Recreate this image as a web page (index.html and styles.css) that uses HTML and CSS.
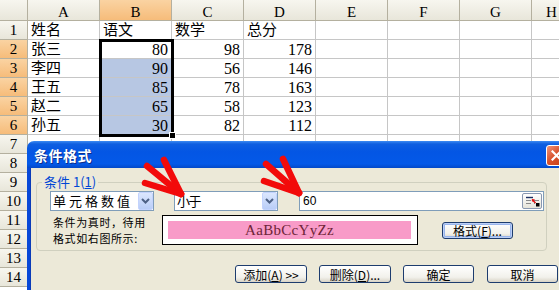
FILE: index.html
```html
<!DOCTYPE html>
<html lang="zh-CN">
<head>
<meta charset="utf-8">
<title>条件格式</title>
<link rel="stylesheet" href="styles.css">
</head>
<body>
<div class="sheet">
  <div class="grid">
    <div class="hd corner"></div>
    <div class="hd ch">A</div><div class="hd ch on">B</div><div class="hd ch">C</div><div class="hd ch">D</div><div class="hd ch">E</div><div class="hd ch">F</div><div class="hd ch">G</div><div class="hd ch">H</div>

    <div class="hd rh">1</div><div class="c">姓名</div><div class="c">语文</div><div class="c">数学</div><div class="c">总分</div><div class="c"></div><div class="c"></div><div class="c"></div><div class="c"></div>
    <div class="hd rh on">2</div><div class="c">张三</div><div class="c n">80</div><div class="c n">98</div><div class="c n">178</div><div class="c"></div><div class="c"></div><div class="c"></div><div class="c"></div>
    <div class="hd rh on">3</div><div class="c">李四</div><div class="c n s">90</div><div class="c n">56</div><div class="c n">146</div><div class="c"></div><div class="c"></div><div class="c"></div><div class="c"></div>
    <div class="hd rh on">4</div><div class="c">王五</div><div class="c n s">85</div><div class="c n">78</div><div class="c n">163</div><div class="c"></div><div class="c"></div><div class="c"></div><div class="c"></div>
    <div class="hd rh on">5</div><div class="c">赵二</div><div class="c n s">65</div><div class="c n">58</div><div class="c n">123</div><div class="c"></div><div class="c"></div><div class="c"></div><div class="c"></div>
    <div class="hd rh on">6</div><div class="c">孙五</div><div class="c n s">30</div><div class="c n">82</div><div class="c n">112</div><div class="c"></div><div class="c"></div><div class="c"></div><div class="c"></div>
    <div class="hd rh">7</div><div class="c"></div><div class="c"></div><div class="c"></div><div class="c"></div><div class="c"></div><div class="c"></div><div class="c"></div><div class="c"></div>
    <div class="hd rh">8</div><div class="c"></div><div class="c"></div><div class="c"></div><div class="c"></div><div class="c"></div><div class="c"></div><div class="c"></div><div class="c"></div>
    <div class="hd rh">9</div><div class="c"></div><div class="c"></div><div class="c"></div><div class="c"></div><div class="c"></div><div class="c"></div><div class="c"></div><div class="c"></div>
    <div class="hd rh">10</div><div class="c"></div><div class="c"></div><div class="c"></div><div class="c"></div><div class="c"></div><div class="c"></div><div class="c"></div><div class="c"></div>
    <div class="hd rh">11</div><div class="c"></div><div class="c"></div><div class="c"></div><div class="c"></div><div class="c"></div><div class="c"></div><div class="c"></div><div class="c"></div>
    <div class="hd rh">12</div><div class="c"></div><div class="c"></div><div class="c"></div><div class="c"></div><div class="c"></div><div class="c"></div><div class="c"></div><div class="c"></div>
    <div class="hd rh">13</div><div class="c"></div><div class="c"></div><div class="c"></div><div class="c"></div><div class="c"></div><div class="c"></div><div class="c"></div><div class="c"></div>
    <div class="hd rh">14</div><div class="c"></div><div class="c"></div><div class="c"></div><div class="c"></div><div class="c"></div><div class="c"></div><div class="c"></div><div class="c"></div>
  </div>
  <div class="selection"><span class="handle"></span></div>
</div>

<div class="dialog">
  <div class="titlebar">
    <span class="title">条件格式</span>
    <span class="close"><svg width="11" height="11" viewBox="0 0 11 11"><path d="M1.5 1.5 L9.5 9.5 M9.5 1.5 L1.5 9.5" stroke="#fff" stroke-width="2.2" stroke-linecap="square"/></svg></span>
  </div>
  <div class="dbody">
    <fieldset class="group">
      <legend>条件 1(<u>1</u>)</legend>
      <div class="row1">
        <div class="combo c1"><span class="val">单元格数值</span><span class="drop"><svg width="9" height="6" viewBox="0 0 9 6"><path d="M1 1 L4.5 4.5 L8 1" fill="none" stroke="#4D6185" stroke-width="2"/></svg></span></div>
        <div class="combo c2"><span class="val">小于</span><span class="drop"><svg width="9" height="6" viewBox="0 0 9 6"><path d="M1 1 L4.5 4.5 L8 1" fill="none" stroke="#4D6185" stroke-width="2"/></svg></span></div>
        <div class="field"><span class="val">60</span><span class="collapse"><svg width="15" height="11" viewBox="0 0 15 11"><path d="M1 1.5 H8" stroke="#1C2F63" stroke-width="1.4"/><path d="M1 4.5 H6 M1 7.5 H6 M9 4.5 H14 M9 7.5 H10" stroke="#8A8A8A" stroke-width="1"/><path d="M7 3.5 L10.5 7" stroke="#E01010" stroke-width="1.6"/><path d="M7 3 L10 3.6 L7.6 6 Z" fill="#E01010"/><rect x="11" y="7" width="3.5" height="3.5" fill="#000"/></svg></span></div>
      </div>
      <div class="row2">
        <div class="hint"><div class="hl">条件为真时，待用</div><div class="hl">格式如右图所示:</div></div>
        <div class="preview"><div class="sample">AaBbCcYyZz</div></div>
        <button class="btn fmt">格式(<u>F</u>)...</button>
      </div>
    </fieldset>
    <div class="actions">
      <button class="btn">添加(<u>A</u>) &gt;&gt;</button>
      <button class="btn">删除(<u>D</u>)...</button>
      <button class="btn">确定</button>
      <button class="btn">取消</button>
    </div>
  </div>
</div>

<svg class="arrows" width="559" height="290" viewBox="0 0 559 290">
  <g fill="none" stroke="#F20A0A" stroke-width="6.5" stroke-linecap="round" stroke-linejoin="round">
    <path d="M145 183 L181 194"/>
    <path d="M147 166 L181 194"/>
    <path d="M164 160 L181 194"/>
    <path d="M264 181 L299 193"/>
    <path d="M266 164 L299 193"/>
    <path d="M283 159 L299 193"/>
  </g>
</svg>
</body>
</html>
```

FILE: styles.css
```css
html, body {
  margin: 0;
  padding: 0;
}
body {
  width: 559px;
  height: 290px;
  overflow: hidden;
  position: relative;
  background: #fff;
  font-family: "Liberation Serif", "Noto Sans CJK SC", serif;
  color: #000;
}

/* spreadsheet */
.sheet {
  position: relative;
}
.grid {
  display: grid;
  grid-template-columns: 28px repeat(7, 72px) 40px;
  grid-template-rows: 21px;
  grid-auto-rows: 19px;
}
.grid > div {
  box-sizing: border-box;
  border-right: 1px solid #C6C6C6;
  border-bottom: 1px solid #C6C6C6;
  white-space: nowrap;
  overflow: hidden;
}
.hd {
  background: linear-gradient(#F7F6EF, #E8E6DA);
  border-color: #B4B09F !important;
  text-align: center;
  font-family: "Liberation Serif", serif;
  font-size: 15px;
  line-height: 20px;
}
.ch {
  padding-top: 2px;
}
.hd.on {
  background: linear-gradient(#FAD3A2, #F6BC7A);
}
.rh {
  line-height: 19px;
}
.c {
  font-family: "Liberation Serif", "Noto Sans CJK SC", serif;
  font-size: 15px;
  line-height: 19px;
  padding-left: 3px;
}
.c.n {
  text-align: right;
  padding-right: 3px;
  font-size: 16px;
}
.c.s {
  background: #B7C7E3;
}
.selection {
  position: absolute;
  left: 99px;
  top: 39px;
  width: 75px;
  height: 98px;
  box-sizing: border-box;
  border: 3px solid #000;
}
.handle {
  position: absolute;
  right: -5px;
  bottom: -5px;
  width: 5px;
  height: 5px;
  background: #000;
  border: 1px solid #fff;
}

/* dialog */
.dialog {
  position: absolute;
  left: 27px;
  top: 141px;
  width: 545px;
  height: 160px;
  display: flex;
  flex-direction: column;
  font-family: "Noto Sans CJK SC", "Liberation Sans", sans-serif;
}
.titlebar {
  height: 27px;
  flex: none;
  display: flex;
  align-items: center;
  justify-content: space-between;
  padding: 0 5px 0 7px;
  border-radius: 7px 7px 0 0;
  background: linear-gradient(#3D8BF2 0, #0F5FE0 3px, #0456E4 40%, #0459E8 85%, #0349C8 100%);
}
.title {
  color: #fff;
  font-weight: bold;
  font-size: 14px;
  letter-spacing: 0.5px;
  text-shadow: 1px 1px 0 #0A2E8C;
}
.close {
  width: 19px;
  height: 19px;
  border: 1px solid #fff;
  border-radius: 3px;
  background: linear-gradient(135deg, #F0957A, #D8532E 45%, #C23A12);
  display: flex;
  align-items: center;
  justify-content: center;
  margin-top: 1px;
}
.dbody {
  flex: 1;
  background: #ECE9D8;
  border-left: 3px solid #0848D8;
  box-shadow: inset 1px 0 0 #0A3BB8;
}
.group {
  margin: 6px 0 0 6px;
  width: 511px;
  box-sizing: border-box;
  border: 1px solid #D0D0BF;
  border-radius: 4px;
  padding: 1px 0 5px 13px;
}
.group legend {
  color: #0046D5;
  font-size: 13px;
  line-height: 16px;
  padding: 0 2px;
  margin-left: -8px;
}
.row1 {
  display: flex;
  height: 20px;
}
.combo, .field {
  box-sizing: border-box;
  height: 20px;
  border: 1px solid #7F9DB9;
  background: #fff;
  display: flex;
  align-items: stretch;
}
.combo {
  width: 104px;
  margin-right: 20px;
}
.combo.c2 {
  margin-right: 21px;
}
.val {
  flex: 1;
  padding-left: 2px;
  font-size: 13px;
  line-height: 18px;
  white-space: nowrap;
}
.c1 .val {
  letter-spacing: 3px;
}
.c2 .val {
  letter-spacing: -1.5px;
}
.drop {
  width: 15px;
  box-sizing: border-box;
  border: 1px solid #C3D3FD;
  border-radius: 2px;
  background: linear-gradient(#DCE7FE, #B9CDF7);
  display: flex;
  align-items: center;
  justify-content: center;
}
.field {
  width: 245px;
  padding: 1px;
}
.field .val {
  font-family: "Liberation Sans", sans-serif;
  font-size: 12px;
  line-height: 16px;
  padding-left: 2px;
}
.collapse {
  width: 20px;
  box-sizing: border-box;
  border: 1px solid #8A98B0;
  border-radius: 2px;
  background: linear-gradient(#FFFFFF, #E6E4DA);
  display: flex;
  align-items: center;
  justify-content: center;
}
.row2 {
  display: flex;
  align-items: center;
  margin-top: 4px;
}
.hint {
  width: 109px;
  height: 30px;
  padding-left: 3px;
  font-size: 11px;
  line-height: 16px;
  white-space: nowrap;
  margin-top: -2px;
  letter-spacing: 0.6px;
}
.hl {
  height: 16px;
}
.preview {
  width: 256px;
  height: 30px;
  box-sizing: border-box;
  border: 1px solid #000;
  background: #fff;
  padding: 5px 6px 5px 5px;
}
.sample {
  height: 18px;
  background: #F89BC8;
  color: #6E2437;
  font-family: "Liberation Serif", serif;
  font-size: 15px;
  line-height: 18px;
  letter-spacing: 0.3px;
  text-align: center;
}
.btn {
  box-sizing: border-box;
  width: 72px;
  height: 18px;
  padding: 0;
  border: 1px solid #1D3C6E;
  border-radius: 3px;
  background: linear-gradient(#FFFFFF, #F2F1EB 70%, #D8D3C6);
  font-family: "Noto Sans CJK SC", "Liberation Sans", sans-serif;
  font-size: 12px;
  line-height: 15px;
  color: #000;
}
.btn.fmt {
  margin-left: 24px;
  width: 71px;
  height: 17px;
  box-shadow: inset 0 0 0 1px #BCD0F6, inset 0 0 0 2px #98B4EC;
}
.actions {
  display: flex;
  gap: 12px;
  padding-left: 205px;
  margin-top: 14px;
}
.actions .btn:nth-child(3) {
  width: 71px;
}
.actions .btn:nth-child(4) {
  margin-left: 1px;
  width: 71px;
}

/* annotation arrows */
.arrows {
  position: absolute;
  left: 0;
  top: 0;
  pointer-events: none;
}
```
